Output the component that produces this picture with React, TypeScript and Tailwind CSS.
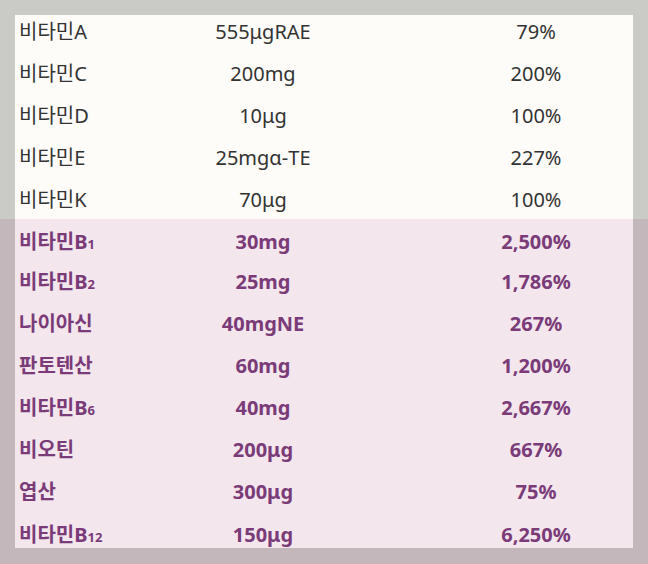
const font = { fontFamily: '"Noto Sans", "Noto Sans CJK KR", sans-serif' };

type Row = { name: React.ReactNode; amount: string; pct: string };

const sub = (base: string, n: string) => (
  <>
    {base}
    <span className="text-[13px]">{n}</span>
  </>
);

const plain: Row[] = [
  { name: "비타민A", amount: "555μgRAE", pct: "79%" },
  { name: "비타민C", amount: "200mg", pct: "200%" },
  { name: "비타민D", amount: "10μg", pct: "100%" },
  { name: "비타민E", amount: "25mgα-TE", pct: "227%" },
  { name: "비타민K", amount: "70μg", pct: "100%" },
];

const highlighted: Row[] = [
  { name: sub("비타민B", "1"), amount: "30mg", pct: "2,500%" },
  { name: sub("비타민B", "2"), amount: "25mg", pct: "1,786%" },
  { name: "나이아신", amount: "40mgNE", pct: "267%" },
  { name: "판토텐산", amount: "60mg", pct: "1,200%" },
  { name: sub("비타민B", "6"), amount: "40mg", pct: "2,667%" },
  { name: "비오틴", amount: "200μg", pct: "667%" },
  { name: "엽산", amount: "300μg", pct: "75%" },
  { name: sub("비타민B", "12"), amount: "150μg", pct: "6,250%" },
];

function TableRow({ row, height }: { row: Row; height: string }) {
  return (
    <div className={`grid grid-cols-[170px_156px_98px_194px] items-center ${height}`}>
      <div className="pl-[4px] whitespace-nowrap">{row.name}</div>
      <div className="text-center whitespace-nowrap">{row.amount}</div>
      <div />
      <div className="text-center whitespace-nowrap">{row.pct}</div>
    </div>
  );
}

export default function App() {
  return (
    <div className="w-[648px] h-[564px] overflow-hidden text-[20px]" style={font}>
      {/* regular nutrients */}
      <div className="bg-[#cacac6] pt-[15px] px-[15px]">
        <div className="bg-[#fdfcf8] text-[#333333]">
          {plain.map((r, i) => (
            <TableRow
              key={i}
              row={r}
              height={i === 0 ? "h-[36px] pb-[2px]" : "h-[42px] pt-[4px]"}
            />
          ))}
        </div>
      </div>

      {/* highlighted B vitamins */}
      <div className="bg-[#c3b7bb] pb-[16px] px-[15px]">
        <div className="bg-[#f3e6ed] text-[#7a3b78] font-bold">
          {highlighted.map((r, i) => (
            <TableRow
              key={i}
              row={r}
              height={
                i === 0
                  ? "h-[42px] pt-[3px]"
                  : i === highlighted.length - 1
                    ? "h-[35px] pt-[7px]"
                    : "h-[42px]"
              }
            />
          ))}
        </div>
      </div>
    </div>
  );
}
